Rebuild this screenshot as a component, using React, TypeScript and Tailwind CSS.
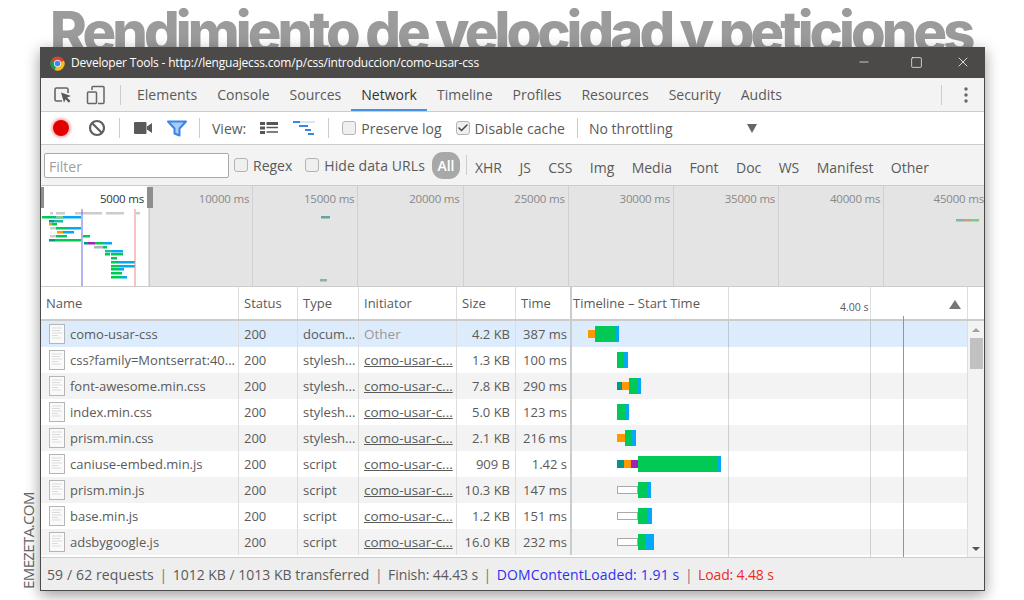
import React from "react";
import { Check, Minus, Square, X } from "lucide-react";

type Seg = [number, string, boolean?];

const GREEN = "#00ca55";
const BLUE = "#03a9f4";
const ORANGE = "#ff9800";
const TEAL = "#009688";
const PURPLE = "#9c27b0";
const IDLE = "idle";

const rows: {
  name: string;
  type: string;
  initiator: string;
  size: string;
  time: string;
  start: number;
  bars: Seg[];
}[] = [
  { name: "como-usar-css", type: "docum...", initiator: "Other", size: "4.2 KB", time: "387 ms", start: 16, bars: [[7, ORANGE, true], [20, GREEN], [4, BLUE]] },
  { name: "css?family=Montserrat:40...", type: "stylesh...", initiator: "como-usar-c...", size: "1.3 KB", time: "100 ms", start: 45, bars: [[7, GREEN], [4, BLUE]] },
  { name: "font-awesome.min.css", type: "stylesh...", initiator: "como-usar-c...", size: "7.8 KB", time: "290 ms", start: 45, bars: [[5, TEAL, true], [7, ORANGE, true], [8, GREEN], [4, BLUE]] },
  { name: "index.min.css", type: "stylesh...", initiator: "como-usar-c...", size: "5.0 KB", time: "123 ms", start: 45, bars: [[8, GREEN], [4, BLUE]] },
  { name: "prism.min.css", type: "stylesh...", initiator: "como-usar-c...", size: "2.1 KB", time: "216 ms", start: 45, bars: [[8, ORANGE, true], [7, GREEN], [4, BLUE]] },
  { name: "caniuse-embed.min.js", type: "script", initiator: "como-usar-c...", size: "909 B", time: "1.42 s", start: 45, bars: [[7, TEAL, true], [7, ORANGE, true], [7, PURPLE, true], [79, GREEN], [4, BLUE]] },
  { name: "prism.min.js", type: "script", initiator: "como-usar-c...", size: "10.3 KB", time: "147 ms", start: 45, bars: [[21, IDLE, true], [9, GREEN], [4, BLUE]] },
  { name: "base.min.js", type: "script", initiator: "como-usar-c...", size: "1.2 KB", time: "151 ms", start: 45, bars: [[21, IDLE, true], [10, GREEN], [4, BLUE]] },
  { name: "adsbygoogle.js", type: "script", initiator: "como-usar-c...", size: "16.0 KB", time: "232 ms", start: 45, bars: [[21, IDLE, true], [7, GREEN], [9, BLUE]] },
];

const tabs = ["Elements", "Console", "Sources", "Network", "Timeline", "Profiles", "Resources", "Security", "Audits"];
const filters = ["XHR", "JS", "CSS", "Img", "Media", "Font", "Doc", "WS", "Manifest", "Other"];
const ticks = ["5000 ms", "10000 ms", "15000 ms", "20000 ms", "25000 ms", "30000 ms", "35000 ms", "40000 ms", "45000 ms"];

// minimap bars: y, x, width, colour
const mini: [number, number, number, string][] = [
  [213, 50, 3, "#ccc"], [213, 56, 9, "#ccc"], [213, 75, 27, "#ccc"], [213, 106, 18, "#ccc"], [213, 136, 4, "#ccc"],
  [217, 42, 12, GREEN], [217, 54, 27, BLUE], [217, 56, 7, "#7fd07f"],
  [221, 49, 5, TEAL], [221, 54, 9, "#25b8a0"],
  [224, 49, 3, ORANGE], [224, 52, 5, GREEN],
  [228, 50, 6, "#ccc"], [228, 56, 11, GREEN], [228, 67, 14, BLUE],
  [232, 57, 6, ORANGE], [232, 63, 11, BLUE],
  [236, 50, 6, "#ccc"], [236, 56, 11, GREEN], [236, 83, 7, GREEN],
  [240, 49, 6, TEAL], [240, 55, 26, GREEN],
  [243, 84, 4, TEAL], [243, 88, 7, PURPLE], [243, 95, 8, GREEN], [243, 103, 9, BLUE],
  [247, 94, 9, "#b5b5b5"], [247, 103, 4, GREEN],
  [251, 105, 7, "#25b8a0"], [251, 112, 11, BLUE],
  [254, 105, 5, GREEN], [254, 111, 12, GREEN],
  [258, 111, 6, GREEN],
  [262, 111, 6, GREEN], [262, 117, 18, BLUE],
  [266, 111, 9, GREEN], [266, 120, 15, BLUE],
  [269, 111, 9, GREEN], [269, 120, 4, BLUE],
  [273, 111, 11, GREEN],
  [277, 111, 11, GREEN], [277, 122, 5, BLUE],
  [217, 321, 9, "#5fa8a0"], [280, 320, 7, "#7fb5ae"],
  [220, 956, 8, "#7fb5ae"], [220, 964, 6, "#c9a070"], [220, 970, 9, "#7fc98f"],
];

const Box = ({ checked, className = "" }: { checked?: boolean; className?: string }) => (
  <span className={`flex h-[14px] w-[14px] shrink-0 items-center justify-center rounded-[3px] border border-[#b4b4b4] bg-[#efefef] ${className}`}>
    {checked && <Check size={12} strokeWidth={3} className="text-[#444]" />}
  </span>
);

const Sep = ({ className = "" }: { className?: string }) => <span className={`h-5 w-px shrink-0 bg-[#ccc] ${className}`} />;

const ChromeLogo = () => (
  <svg width="15" height="15" viewBox="0 0 16 16" className="shrink-0">
    <circle cx="8" cy="8" r="7.5" fill="#db4437" />
    <path d="M8 8 L1.5 4.2 A7.5 7.5 0 0 0 5 14.9 L8 8Z" fill="#0f9d58" />
    <path d="M8 8 L14.9 5 A7.5 7.5 0 0 1 5 14.9 L8 8Z" fill="#f4c20d" />
    <circle cx="8" cy="8" r="3.8" fill="#fff" />
    <circle cx="8" cy="8" r="3" fill="#4285f4" />
  </svg>
);

const FileIcon = () => (
  <svg width="16" height="20" viewBox="0 0 16 20" className="shrink-0">
    <rect x="0.5" y="0.5" width="15" height="19" fill="#fafafa" stroke="#b5b5b5" />
    <path d="M3 4h10M3 6.5h8M3 9h10M3 11.5h6M3 14h9" stroke="#dcdcdc" strokeWidth="1" />
  </svg>
);

const Bars = ({ start, bars }: { start: number; bars: Seg[] }) => (
  <div className="flex h-full items-center" style={{ paddingLeft: start }}>
    {bars.map(([w, c, thin], i) =>
      c === IDLE ? (
        <span key={i} className="h-2 border border-[#a9a9a9] bg-white" style={{ width: w }} />
      ) : (
        <span key={i} className={thin ? "h-2" : "h-4"} style={{ width: w, background: c }} />
      ),
    )}
  </div>
);

export default function App() {
  return (
    <div className="relative h-[600px] w-[1024px] overflow-hidden bg-white font-['Open_Sans',sans-serif] text-[13px] text-[#5a5a5a]">
      <div className="h-[47px] overflow-hidden whitespace-nowrap pl-[50px] font-['Inter',sans-serif] text-[56px] font-extrabold leading-[65px] tracking-[-3.9px] text-[#9b9b9b]">
        Rendimiento de velocidad y peticiones
      </div>

      <span className="absolute bottom-[11px] left-[36px] origin-bottom-left -rotate-90 whitespace-nowrap text-[15px] leading-none tracking-[-0.6px] text-[#666]">
        EMEZETA.COM
      </span>

      <div className="relative ml-10 flex h-[544px] w-[945px] flex-col border border-[#4c4a48] bg-white shadow-[0_4px_14px_rgba(0,0,0,0.4)]">
        {/* title bar */}
        <div className="flex h-[30px] shrink-0 items-center bg-[#4c4a48] pl-[9px] text-[12px] tracking-[-0.18px] text-white">
          <ChromeLogo />
          <span className="ml-[6px]">Developer Tools - http://lenguajecss.com/p/css/introduccion/como-usar-css</span>
          <div className="ml-auto flex items-center pb-[2px] pr-[13px]">
            <Minus size={14} strokeWidth={1.2} />
            <Square size={13} strokeWidth={1.3} className="ml-[39px]" />
            <X size={16} strokeWidth={1.2} className="ml-[32px]" />
          </div>
        </div>

        {/* panel tabs */}
        <div className="flex h-[34px] shrink-0 items-center border-b border-[#ccc] bg-[#f3f3f3] pl-[12px] text-[14px]">
          <svg width="20" height="20" viewBox="0 0 20 20" fill="none" className="shrink-0">
            <path d="M9 16H3.5A1.5 1.5 0 0 1 2 14.500V4.500A1.500 1.500 0 0 1 3.500 3h10A1.500 1.500 0 0 1 15 4.500V8" stroke="#666" strokeWidth="1.6" />
            <path d="M8 7.500l10 3.500-4 1.500 3.500 3.500-1.700 1.700-3.300-3.500-1.500 3.500z" fill="#5a5a5a" />
          </svg>
          <svg width="20" height="20" viewBox="0 0 20 20" fill="none" className="ml-[13px] shrink-0">
            <path d="M6 5V2.500A1 1 0 0 1 7 1.500h10a1 1 0 0 1 1 1v15a1 1 0 0 1-1 1h-5" stroke="#666" strokeWidth="1.500" />
            <rect x="1.500" y="7" width="9" height="11.500" rx="1" stroke="#666" strokeWidth="1.500" />
          </svg>
          <Sep className="ml-[14px] mr-[6px]" />
          {tabs.map((t) => (
            <span
              key={t}
              className={`flex h-full items-center border-y-2 border-t-transparent px-[10px] ${t === "Network" ? "border-b-[#4a90e2] text-[#333]" : "border-b-transparent"}`}
            >
              {t}
            </span>
          ))}
          <Sep className="ml-auto" />
          <svg width="4" height="16" viewBox="0 0 4 16" className="ml-[22px] mr-[16px] shrink-0" fill="#666">
            <circle cx="2" cy="2" r="1.700" />
            <circle cx="2" cy="8" r="1.700" />
            <circle cx="2" cy="14" r="1.700" />
          </svg>
        </div>

        {/* network toolbar */}
        <div className="flex h-[33px] shrink-0 items-center border-b border-[#ccc] bg-white pl-[12px] text-[14px]">
          <span className="h-4 w-4 shrink-0 rounded-full bg-[#e20000] shadow-[0_0_3px_2px_rgba(226,0,0,0.3)]" />
          <svg width="18" height="18" viewBox="0 0 18 18" fill="none" className="ml-[19px] shrink-0">
            <circle cx="9" cy="9" r="7" stroke="#5f5f5f" strokeWidth="2.200" />
            <path d="M4 4l10 10" stroke="#5f5f5f" strokeWidth="2.200" />
          </svg>
          <Sep className="ml-[13px]" />
          <svg width="18" height="12" viewBox="0 0 18 12" className="ml-[14px] shrink-0" fill="#5a5a5a">
            <rect x="0" y="0" width="12.500" height="12" rx="1" />
            <path d="M13 4.500L18 1v10l-5-3.500z" />
          </svg>
          <svg width="20" height="17" viewBox="0 0 20 17" fill="none" className="ml-[15px] shrink-0">
            <path d="M1 1.500h18l-6.500 7v7l-5-2v-5z" fill="#a9cdf7" stroke="#3a86e8" strokeWidth="2" strokeLinejoin="round" />
          </svg>
          <Sep className="ml-[12px]" />
          <span className="ml-[12px]">View:</span>
          <svg width="18" height="12" viewBox="0 0 18 12" className="ml-[14px] shrink-0">
            <path d="M0 0h5v3H0zM0 4.500h5v3H0zM0 9h5v3H0z" fill="#555" />
            <path d="M6.500 0H18v3H6.500zM6.500 4.800H18v1.500H6.500zM6.500 9.300H18v1.500H6.500z" fill="#555" />
          </svg>
          <svg width="22" height="14" viewBox="0 0 22 14" className="ml-[15px] shrink-0">
            <rect x="0" y="0" width="22" height="2" fill="#d6e6fb" />
            <path d="M0 0h7v2H0zM6 4h9v2H6zM12 8h6v2h-6zM15 12h6v2h-6z" fill="#3a86e8" />
          </svg>
          <Sep className="ml-[13px]" />
          <Box className="ml-[13px]" />
          <span className="ml-[5px]">Preserve log</span>
          <Box checked className="ml-[14px]" />
          <span className="ml-[5px] tracking-[0.08px]">Disable cache</span>
          <Sep className="ml-[12px]" />
          <span className="ml-[11px]">No throttling</span>
          <span className="ml-[74px] h-0 w-0 border-x-[5.500px] border-t-[9px] border-x-transparent border-t-[#666]" />
        </div>

        {/* filter bar */}
        <div className="flex h-[41px] shrink-0 items-center border-b border-[#ccc] bg-[#f3f3f3] pl-[3px] text-[14px]">
          <div className="flex h-[25px] w-[185px] shrink-0 items-center rounded-[2px] border border-[#a9a9a9] bg-white pl-1 pt-[2px] text-[#a0a0a0]">Filter</div>
          <Box className="ml-[5px]" />
          <span className="ml-[5px]">Regex</span>
          <Box className="ml-[13px]" />
          <span className="ml-[5px] tracking-[0.08px]">Hide data URLs</span>
          <span className="ml-[7px] flex h-[27px] w-7 shrink-0 items-center justify-center rounded-[11px] bg-[#a8a8a8] pt-px font-semibold text-white">All</span>
          <Sep className="ml-[6px]" />
          <div className="ml-[8px] flex items-center gap-[17.400px] pt-[4px]">
            {filters.map((f) => (
              <span key={f}>{f}</span>
            ))}
          </div>
        </div>

        {/* overview */}
        <div className="relative flex h-[101px] shrink-0 overflow-hidden border-b border-[#ccc] bg-[#e4e4e4] text-[11.500px] tracking-[-0.2px]">
          {ticks.map((t, i) => (
            <div
              key={t}
              className={`flex h-full justify-end pt-[4px] ${
                i === 0
                  ? "w-[107px] shrink-0 bg-white pr-[4px] text-[#333]"
                  : i === 8
                    ? "min-w-0 flex-1 whitespace-nowrap text-[#888]"
                    : "w-[105.200px] shrink-0 border-r border-[#d0d0d0] pr-[3px] text-[#888]"
              }`}
            >
              {t}
            </div>
          ))}
          <span className="absolute left-0 top-[1px] h-[21px] w-[3px] bg-[#8e8e8e]" />
          <span className="absolute left-[106px] top-[1px] h-[21px] w-[6px] bg-[#8e8e8e]" />
          <span className="absolute bottom-0 left-[108px] top-[22px] w-px bg-[#c8c8c8]" />
          <svg className="absolute left-0 top-0" width="943" height="100" viewBox="41 186 943 100">
            {mini.map(([y, x, w, c], i) => (
              <rect key={i} x={x} y={y - 1} width={w} height="2.500" fill={c} />
            ))}
            <rect x="81.500" y="209" width="1" height="77" fill="#6a6ae8" />
            <rect x="134.500" y="209" width="1" height="77" fill="#f08a8a" />
          </svg>
        </div>

        {/* table header */}
        <div className="flex h-[34px] shrink-0 border-b-2 border-[#ccc]">
          <div className="flex w-[198px] shrink-0 items-center border-r border-[#ddd] pl-[5px] pt-[2px]">Name</div>
          <div className="flex w-[59px] shrink-0 items-center border-r border-[#ddd] pl-[5px] pt-[2px]">Status</div>
          <div className="flex w-[61px] shrink-0 items-center border-r border-[#ddd] pl-[5px] pt-[2px]">Type</div>
          <div className="flex w-[98px] shrink-0 items-center border-r border-[#ddd] pl-[5px] pt-[2px]">Initiator</div>
          <div className="flex w-[59px] shrink-0 items-center border-r border-[#ddd] pl-[5px] pt-[2px]">Size</div>
          <div className="flex w-[56px] shrink-0 items-center border-r-2 border-[#ccc] pl-[5px] pt-[2px]">Time</div>
          <div className="relative flex w-[395px] shrink-0 items-center pl-px pt-[2px]">
            Timeline – Start Time
            <span className="absolute left-[156px] top-0 h-full w-px bg-[#ddd]" />
            <span className="absolute left-[298px] top-0 h-full w-px bg-[#ddd]" />
            <span className="absolute left-[268px] top-[13px] text-[10.500px]">4.00 s</span>
            <span className="absolute left-[377px] top-[13px] h-0 w-0 border-x-[6px] border-b-[9px] border-x-transparent border-b-[#777]" />
          </div>
          <div className="flex-1 border-l border-[#ddd]" />
        </div>

        {/* rows */}
        <div className="flex h-[236px] shrink-0">
          <div className="relative w-[926px] shrink-0 overflow-hidden">
            {rows.map((r, i) => (
              <div
                key={r.name}
                className={`flex h-[26px] items-center ${i === 0 ? "bg-[#dcecfc]" : i % 2 === 1 ? "bg-white" : "bg-[#f3f3f3]"}`}
              >
                <div className="flex h-full w-[198px] shrink-0 items-center gap-[5px] overflow-hidden whitespace-nowrap border-r border-[#ddd] pl-[8px]">
                  <FileIcon />
                  <span className="pt-[2px]">{r.name}</span>
                </div>
                <div className="flex h-full w-[59px] shrink-0 items-center border-r border-[#ddd] pl-[5px] pt-[2px]">200</div>
                <div className="flex h-full w-[61px] shrink-0 items-center whitespace-nowrap border-r border-[#ddd] pl-[5px] pt-[2px]">{r.type}</div>
                <div className={`flex h-full w-[98px] shrink-0 items-center whitespace-nowrap border-r border-[#ddd] pl-[5px] text-[13.500px] ${i === 0 ? "text-[#999]" : "underline"}`}>
                  {r.initiator}
                </div>
                <div className="flex h-full w-[59px] shrink-0 items-center justify-end border-r border-[#ddd] pr-[5px] pt-[2px]">{r.size}</div>
                <div className="flex h-full w-[56px] shrink-0 items-center justify-end whitespace-nowrap border-r-2 border-[#ccc] pr-[3px] pt-[2px]">{r.time}</div>
                <div className="h-full w-[395px] shrink-0">
                  <Bars start={r.start} bars={r.bars} />
                </div>
              </div>
            ))}
            <span className="absolute bottom-0 left-[687px] top-0 w-px bg-black/15" />
            <span className="absolute bottom-0 left-[829px] top-0 w-px bg-black/15" />
          </div>
          <div className="flex flex-1 flex-col items-center border-l border-[#ddd] bg-[#f3f3f3]">
            <span className="mt-[7px] h-0 w-0 border-x-[4px] border-b-[4px] border-x-transparent border-b-[#a0a0a0]" />
            <span className="mt-[6px] h-[31px] w-[13px] bg-[#c1c1c1]" />
            <span className="mb-[6px] mt-auto h-0 w-0 border-x-[4px] border-t-[4px] border-x-transparent border-t-[#555]" />
          </div>
        </div>

        {/* red load marker runs from the header down through the rows */}
        <span className="absolute bottom-[33px] left-[862px] top-[268px] w-px bg-[#e57373]" />

        {/* status bar */}
        <div className="flex h-[33px] flex-1 items-center whitespace-nowrap border-t border-[#ccc] bg-[#eee] pl-[6px] text-[14px]">
          <span className="tracking-[0.12px]">59 / 62 requests</span>
          <span className="mx-[5.500px] text-[#777]">|</span>
          <span>1012 KB / 1013 KB transferred</span>
          <span className="mx-[5.500px] text-[#777]">|</span>
          <span className="tracking-[-0.1px]">Finish: 44.43 s</span>
          <span className="mx-[5.500px] text-[#777]">|</span>
          <span className="tracking-[0.12px] text-[#3030ee]">DOMContentLoaded: 1.91 s</span>
          <span className="mx-[5.500px] text-[#777]">|</span>
          <span className="tracking-[-0.15px] text-[#ee2a2a]">Load: 4.48 s</span>
        </div>
      </div>
    </div>
  );
}
